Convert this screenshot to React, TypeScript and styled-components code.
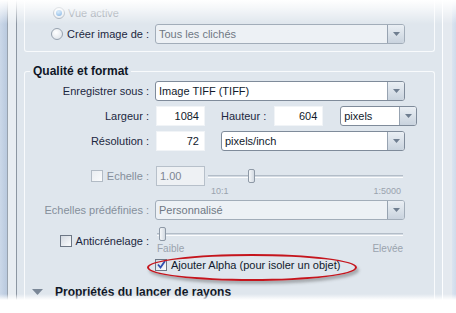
import React from 'react';
import styled, { createGlobalStyle } from 'styled-components';

const GlobalStyle = createGlobalStyle`
  html, body {
    margin: 0;
    padding: 0;
    background: #fff;
  }

  body {
    font-family: 'Liberation Sans', Arial, sans-serif;
    font-size: 11px;
    color: #1c2740;
  }
`;

const Screen = styled.div`
  position: relative;
  width: 456px;
  height: 313px;
  overflow: hidden;
  display: flex;
  background: #dfe6ed;
`;

const LeftStrip = styled.div`
  width: 7px;
  background: linear-gradient(to right, #cbd8e9, #b9c9de);
`;

const LeftEdge = styled.div`
  width: 8px;
  border-left: 1px solid #98a2ae;
  border-right: 1px solid #8c96a2;
  background: #e8edf2;
`;

const RightEdge = styled.div`
  width: 9px;
  border-left: 1px solid #fdfeff;
  background: #e4e9ef;
`;

const RightStrip = styled.div`
  width: 4px;
  background: linear-gradient(to right, #dbe4f0, #cfdbeb);
`;

const Panel = styled.div`
  width: 425px;
  flex: none;
  box-sizing: border-box;
  padding: 0 7px;
  display: flex;
  flex-direction: column;
`;

const TopGroup = styled.div`
  height: 52px;
  box-sizing: border-box;
  border: 1px solid #f8fafc;
  border-top: none;
  border-radius: 0 0 3px 3px;
  padding-top: 5px;
  display: flex;
  flex-direction: column;
`;

const Group = styled.fieldset`
  margin: 12px 0 0;
  padding: 0;
  min-width: 0;
  flex: 1;
  border: 1px solid #f8fafc;
  border-bottom: none;
  border-radius: 3px 3px 0 0;
  display: flex;
  flex-direction: column;
`;

const GroupTitle = styled.legend`
  margin-left: 5px;
  padding: 0 3px;
  font-size: 12px;
  line-height: 14px;
  font-weight: bold;
  color: #0f1626;
`;

const FieldRow = styled.div<{ $h: number; $mt: number }>`
  display: grid;
  grid-template-columns: 124px 1fr;
  column-gap: 6px;
  align-items: start;
  height: ${(p) => p.$h}px;
  margin-top: ${(p) => p.$mt}px;
`;

const Label = styled.div<{ $disabled?: boolean; $pad?: number }>`
  display: flex;
  align-items: center;
  justify-content: flex-end;
  gap: 4px;
  height: 20px;
  padding-top: ${(p) => p.$pad || 0}px;
  white-space: nowrap;
  color: ${(p) => (p.$disabled ? '#858f9b' : '#1c2740')};
`;

const Controls = styled.div`
  display: flex;
  align-items: flex-start;
  white-space: nowrap;
`;

const InlineLabel = styled.span<{ $ml: number }>`
  margin: 0 7px 0 ${(p) => p.$ml}px;
  line-height: 20px;
`;

const RadioRow = styled.div<{ $disabled?: boolean }>`
  display: flex;
  align-items: center;
  gap: 3px;
  height: 16px;
  padding-left: 28px;
  color: ${(p) => (p.$disabled ? '#8b949f' : '#1c2740')};
`;

const RadioDot = styled.span<{ $on?: boolean }>`
  position: relative;
  width: 12px;
  height: 12px;
  box-sizing: border-box;
  border-radius: 50%;
  border: 1px solid #97a2af;
  background: radial-gradient(circle at 40% 35%, #ffffff, #d9dfe6);
  flex: none;

  &::after {
    content: '';
    display: ${(p) => (p.$on ? 'block' : 'none')};
    position: absolute;
    left: 2px;
    top: 2px;
    width: 6px;
    height: 6px;
    border-radius: 50%;
    background: radial-gradient(circle at 40% 35%, #a9d3f5, #3b86d2);
  }
`;

const CheckBox = styled.span<{ $disabled?: boolean }>`
  width: 12px;
  height: 12px;
  box-sizing: border-box;
  flex: none;
  display: flex;
  align-items: center;
  justify-content: center;
  border: 1px solid ${(p) => (p.$disabled ? '#b2bbc5' : '#6d7785')};
  background: ${(p) =>
    p.$disabled
      ? 'linear-gradient(135deg, #e9edf1, #fafbfc)'
      : 'linear-gradient(135deg, #d4dae2, #fbfcfd)'};
`;

const SelectBox = styled.div<{ $w: number; $disabled?: boolean }>`
  width: ${(p) => p.$w}px;
  height: 20px;
  box-sizing: border-box;
  flex: none;
  display: flex;
  border: 1px solid ${(p) => (p.$disabled ? '#a2adb9' : '#7f8b9a')};
  border-radius: 3px;
  background: ${(p) => (p.$disabled ? '#edf1f5' : '#fff')};
  color: ${(p) => (p.$disabled ? '#6f7884' : '#111a2c')};
`;

const SelectValue = styled.div`
  flex: 1;
  padding-left: 3px;
  line-height: 18px;
  overflow: hidden;
`;

const SelectButton = styled.div`
  width: 16px;
  display: flex;
  align-items: center;
  justify-content: center;
  border-left: 1px solid #97a3b1;
  border-radius: 0 2px 2px 0;
  background: linear-gradient(#eaeff4, #c9d3de);
`;

const TextBox = styled.div<{ $disabled?: boolean }>`
  width: 49px;
  height: 20px;
  box-sizing: border-box;
  flex: none;
  margin-left: 1px;
  line-height: 18px;
  border: 1px solid ${(p) => (p.$disabled ? '#b7c0ca' : '#f1f4f7')};
  background: ${(p) => (p.$disabled ? '#eef1f4' : '#fff')};
  color: ${(p) => (p.$disabled ? '#7d8693' : '#111a2c')};
  text-align: ${(p) => (p.$disabled ? 'left' : 'right')};
  padding: 0 5px 0 3px;
`;

const SliderBlock = styled.div<{ $w: number; $ml: number }>`
  width: ${(p) => p.$w}px;
  margin-left: ${(p) => p.$ml}px;
  display: flex;
  flex-direction: column;
`;

const TrackArea = styled.div<{ $h: number }>`
  position: relative;
  height: ${(p) => p.$h}px;
  display: flex;
  align-items: center;
`;

const Track = styled.div`
  width: 100%;
  height: 1px;
  border-top: 1px solid #b3bdc8;
  border-bottom: 1px solid #fbfcfd;
  background: #d3dae2;
`;

const Thumb = styled.div`
  position: absolute;
  top: 50%;
  width: 7px;
  height: 14px;
  margin-top: -7px;
  box-sizing: border-box;
  border: 1px solid #8e99a6;
  border-radius: 2px;
  background: linear-gradient(to right, #f5f7f9, #d3dae2);
`;

const Ticks = styled.div<{ $size: number; $mt: number; $inset: string }>`
  display: flex;
  justify-content: space-between;
  margin-top: ${(p) => p.$mt}px;
  padding: ${(p) => p.$inset};
  height: 10px;
  line-height: 10px;
  font-size: ${(p) => p.$size}px;
  color: #9aa3ae;
`;

const AlphaOption = styled.div`
  position: relative;
  display: inline-flex;
  align-items: center;
  gap: 4px;
  height: 13px;
  color: #111a2c;

  &::before {
    content: '';
    position: absolute;
    left: -8px;
    right: -17px;
    top: -4px;
    bottom: -10px;
    border: 2px solid #c5151d;
    border-radius: 50%;
    box-shadow: 2px 3px 3px rgba(60, 60, 60, 0.35);
  }
`;

const Rollout = styled.div`
  display: flex;
  align-items: center;
  gap: 12px;
  height: 14px;
  margin-top: 14px;
  padding-left: 7px;
  font-size: 12px;
  font-weight: bold;
  color: #0f1626;
`;

const TopFade = styled.div`
  position: absolute;
  left: 0;
  right: 0;
  top: 0;
  height: 24px;
  pointer-events: none;
  background: linear-gradient(#fff 0px, rgba(255, 255, 255, 0.65) 9px, rgba(255, 255, 255, 0) 24px);
`;

const BottomFade = styled.div`
  position: absolute;
  left: 0;
  right: 0;
  bottom: 0;
  height: 19px;
  pointer-events: none;
  background: linear-gradient(rgba(255, 255, 255, 0) 0px, #fff 6px);
`;

const Arrow = () => (
  <svg width="7" height="4" viewBox="0 0 7 4">
    <path d="M0 0h7L3.5 4z" fill="#6f7e90" />
  </svg>
);

const Select = ({ value, width, disabled }: { value: string; width: number; disabled?: boolean }) => (
  <SelectBox $w={width} $disabled={disabled}>
    <SelectValue>{value}</SelectValue>
    <SelectButton>
      <Arrow />
    </SelectButton>
  </SelectBox>
);

const Check = ({ checked, disabled }: { checked?: boolean; disabled?: boolean }) => (
  <CheckBox $disabled={disabled}>
    {checked && (
      <svg width="9" height="9" viewBox="0 0 9 9">
        <path d="M1 4.5 L3.5 7.5 L8 1" stroke="#2f4fb0" strokeWidth="1.8" fill="none" />
      </svg>
    )}
  </CheckBox>
);

const Slider = ({
  width,
  offset,
  thumb,
  trackHeight,
  ticks,
  tickSize,
  tickGap,
  tickInset,
}: {
  width: number;
  offset: number;
  thumb: number;
  trackHeight: number;
  ticks: [string, string];
  tickSize: number;
  tickGap: number;
  tickInset: string;
}) => (
  <SliderBlock $w={width} $ml={offset}>
    <TrackArea $h={trackHeight}>
      <Track />
      <Thumb style={{ left: thumb }} />
    </TrackArea>
    <Ticks $size={tickSize} $mt={tickGap} $inset={tickInset}>
      <span>{ticks[0]}</span>
      <span>{ticks[1]}</span>
    </Ticks>
  </SliderBlock>
);

export default function App() {
  return (
    <>
      <GlobalStyle />
      <Screen>
        <LeftStrip />
        <LeftEdge />
        <Panel>
          <TopGroup>
            <RadioRow $disabled>
              <RadioDot $on />
              Vue active
            </RadioRow>
            <FieldRow $h={20} $mt={3}>
              <Label>
                <RadioDot />
                <span>Créer image de :</span>
              </Label>
              <Select value="Tous les clichés" width={250} disabled />
            </FieldRow>
          </TopGroup>

          <Group>
            <GroupTitle>Qualité et format</GroupTitle>
            <FieldRow $h={20} $mt={3}>
              <Label>Enregistrer sous :</Label>
              <Select value="Image TIFF (TIFF)" width={250} />
            </FieldRow>
            <FieldRow $h={20} $mt={5}>
              <Label>Largeur :</Label>
              <Controls>
                <TextBox>1084</TextBox>
                <InlineLabel $ml={16}>Hauteur :</InlineLabel>
                <TextBox>604</TextBox>
                <InlineLabel $ml={10}> </InlineLabel>
                <Select value="pixels" width={77} />
              </Controls>
            </FieldRow>
            <FieldRow $h={20} $mt={5}>
              <Label>Résolution :</Label>
              <Controls>
                <TextBox>72</TextBox>
                <InlineLabel $ml={9}> </InlineLabel>
                <Select value="pixels/inch" width={184} />
              </Controls>
            </FieldRow>
            <FieldRow $h={30} $mt={15}>
              <Label $disabled>
                <Check disabled />
                <span>Echelle :</span>
              </Label>
              <Controls>
                <TextBox $disabled>1.00</TextBox>
                <Slider
                  width={195}
                  offset={3}
                  thumb={40}
                  trackHeight={20}
                  ticks={['10:1', '1:5000']}
                  tickSize={9}
                  tickGap={0}
                  tickInset="0 2px 0 3px"
                />
              </Controls>
            </FieldRow>
            <FieldRow $h={20} $mt={4}>
              <Label $disabled>Echelles prédéfinies :</Label>
              <Select value="Personnalisé" width={250} disabled />
            </FieldRow>
            <FieldRow $h={27} $mt={7}>
              <Label $pad={4}>
                <Check />
                <span>Anticrénelage :</span>
              </Label>
              <Slider
                width={246}
                offset={2}
                thumb={2}
                trackHeight={14}
                ticks={['Faible', 'Elevée']}
                tickSize={10}
                tickGap={3}
                tickInset="0 0 0 0"
              />
            </FieldRow>
            <FieldRow $h={13} $mt={4}>
              <span />
              <Controls>
                <AlphaOption>
                  <Check checked />
                  <span>Ajouter Alpha (pour isoler un objet)</span>
                </AlphaOption>
              </Controls>
            </FieldRow>
            <Rollout>
              <svg width="11" height="6" viewBox="0 0 11 6">
                <path d="M0 0h11L5.5 6z" fill="#7a8797" />
              </svg>
              Propriétés du lancer de rayons
            </Rollout>
          </Group>
        </Panel>
        <RightEdge />
        <RightStrip />
        <TopFade />
        <BottomFade />
      </Screen>
    </>
  );
}
